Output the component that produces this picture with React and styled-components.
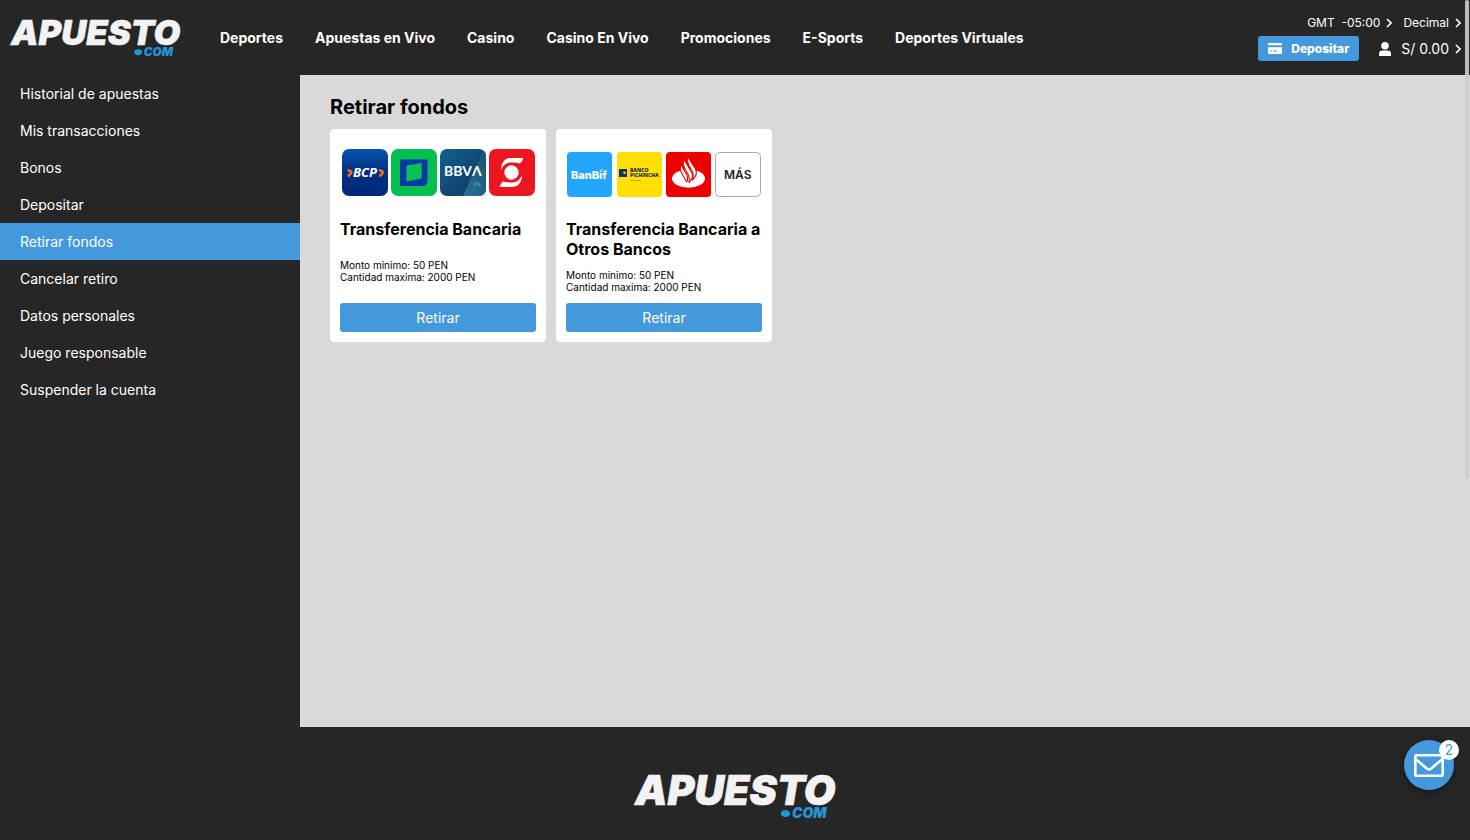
import React from "react";
import styled, { createGlobalStyle } from "styled-components";

const GlobalStyle = createGlobalStyle`
* {
	box-sizing: border-box;
}
body {
	margin: 0;
	background: #262626;
	font-family: Inter, "Liberation Sans", sans-serif;
	font-size: 14px;
	color: #fff;
}
a {
	color: inherit;
	text-decoration: none;
}
button {
	font-family: inherit;
	border: none;
	cursor: pointer;
}
`;

const Page = styled.div`
	min-height: 100vh;
	display: flex;
	flex-direction: column;
`;

const Header = styled.header`
	height: 75px;
	display: flex;
	align-items: center;
	padding: 0 9px 0 11px;
`;

const LogoSvg = styled.svg`
	display: block;
	width: ${(props) => props.$width}px;
	height: auto;
	overflow: visible;
`;

const Nav = styled.nav`
	display: flex;
	flex: 1;
	gap: 32px;
	margin-left: 40px;
	font-weight: 700;
	white-space: nowrap;
`;

const UserArea = styled.div`
	display: flex;
	flex-direction: column;
	align-items: flex-end;
	gap: 4px;
`;

const UserRow = styled.div`
	display: flex;
	align-items: center;
	gap: ${(props) => props.$gap}px;
`;

const MenuButton = styled.button`
	display: flex;
	align-items: center;
	gap: 6px;
	padding: 0;
	background: none;
	color: #fff;
	font-size: ${(props) => props.$size}px;
	line-height: 18px;
`;

const DepositButton = styled.button`
	display: flex;
	align-items: center;
	gap: 9px;
	height: 25px;
	padding: 0 10px;
	border-radius: 3px;
	background: #4499dc;
	color: #fff;
	font-size: 12px;
	font-weight: 800;
`;

const Body = styled.div`
	display: flex;
	flex: 1;
`;

const Sidebar = styled.aside`
	width: 300px;
	flex-shrink: 0;
`;

const SideLink = styled.a`
	display: block;
	padding: 0 20px;
	line-height: 37px;
	background: ${(props) => (props.$active ? "#4499dc" : "transparent")};
`;

const Main = styled.main`
	flex: 1;
	padding: 20px 30px;
	background: #d9d9d9;
	color: #000;
`;

const Title = styled.h1`
	margin: 0 0 10px;
	font-size: 20px;
	line-height: 24px;
	font-weight: 700;
`;

const Cards = styled.div`
	display: flex;
	flex-wrap: wrap;
	gap: 10px;
`;

const Card = styled.section`
	display: flex;
	flex-direction: column;
	justify-content: space-between;
	width: 216px;
	min-height: 213px;
	padding: 10px;
	border-radius: 4px;
	background: #fff;
`;

const BankSvg = styled.svg`
	display: block;
	width: 100%;
	height: 80px;
`;

const CardTitle = styled.h2`
	margin: 0;
	font-size: 16px;
	line-height: 20px;
	font-weight: 700;
`;

const Limits = styled.p`
	margin: 0;
	font-size: 10px;
	line-height: 12px;
`;

const WithdrawButton = styled.button`
	height: 29px;
	border-radius: 3px;
	background: #4499dc;
	color: #fff;
	font-size: 14px;
`;

const Footer = styled.footer`
	display: flex;
	justify-content: center;
	padding: 46px 0 22px;
`;

const ChatButton = styled.button`
	position: fixed;
	right: 16px;
	bottom: 50px;
	display: flex;
	align-items: center;
	justify-content: center;
	width: 50px;
	height: 50px;
	padding: 0;
	border-radius: 50%;
	background: #4499dc;
	box-shadow: 0 2px 8px rgba(0, 0, 0, 0.4);
`;

const Badge = styled.span`
	position: absolute;
	top: 0;
	right: -5px;
	width: 20px;
	border-radius: 50%;
	background: #fff;
	color: #4499dc;
	font-size: 14px;
	line-height: 20px;
	text-align: center;
`;

const ScrollThumb = styled.div`
	position: fixed;
	top: 0;
	right: 1px;
	width: 4px;
	height: 57vh;
	border-radius: 2px;
	background: rgba(204, 204, 204, 0.9);
`;

const Logo = ({ width }) => (
  <LogoSvg $width={width} viewBox="0 0 200 45" role="img" aria-label="Apuesto.com">
    <text
      x="0"
      y="32"
      fontFamily="Inter"
      fontSize="41"
      fontWeight="900"
      fontStyle="italic"
      fill="#f2f2f2"
      stroke="#f2f2f2"
      strokeWidth="0.6"
    >
      APUESTO
    </text>
    <ellipse cx="150.5" cy="40.5" rx="4.6" ry="3.6" fill="#2196d9" />
    <text
      x="157"
      y="45"
      fontFamily="Inter"
      fontSize="14"
      fontWeight="900"
      fontStyle="italic"
      fill="#2196d9"
    >
      COM
    </text>
  </LogoSvg>
);

const Chevron = () => (
  <svg width="6" height="10" viewBox="0 0 6 10" fill="none" stroke="#fff" strokeWidth="1.6">
    <path d="M1 1l4 4-4 4" />
  </svg>
);

const CardIcon = () => (
  <svg width="14" height="11" viewBox="0 0 14 11" fill="#fff">
    <path d="M1 0h12a1 1 0 0 1 1 1v1.2H0V1a1 1 0 0 1 1-1z" />
    <path d="M0 4.2h14V10a1 1 0 0 1-1 1H1a1 1 0 0 1-1-1zM2 7.6v1h2v-1zM5 7.6v1h4v-1z" fillRule="evenodd" />
  </svg>
);

const UserIcon = () => (
  <svg width="12" height="14" viewBox="0 0 12 14" fill="#fff">
    <circle cx="6" cy="3.8" r="3.8" />
    <path d="M0 14v-2.2C0 9.8 1.5 8.6 3.2 8.6h5.6c1.7 0 3.2 1.200 3.2 3.200V14z" />
  </svg>
);

const MailIcon = () => (
  <svg width="30" height="23" viewBox="0 0 30 23" fill="none" stroke="#fff" strokeWidth="2.6" strokeLinejoin="round">
    <rect x="1.3" y="1.3" width="27.4" height="20.4" rx="1.5" />
    <path d="M1.5 5l11.3 9.5c1.4 1.1 3 1.1 4.4 0L28.5 5" />
  </svg>
);

const MainBanks = () => (
  <BankSvg viewBox="0 0 196 80" role="img" aria-label="BCP, Interbank, BBVA, Scotiabank">
    <defs>
      <linearGradient id="bcp" x1="0" y1="0" x2="0" y2="1">
        <stop offset="0" stopColor="#0653ae" />
        <stop offset="0.5" stopColor="#023080" />
        <stop offset="1" stopColor="#02287a" />
      </linearGradient>
      <linearGradient id="bbva" x1="0" y1="0" x2="1" y2="1">
        <stop offset="0" stopColor="#14608b" />
        <stop offset="1" stopColor="#0c3565" />
      </linearGradient>
      <linearGradient id="bbvaShade" x1="1" y1="0" x2="0" y2="1">
        <stop offset="0" stopColor="#1d4e72" />
        <stop offset="1" stopColor="#2a7396" />
      </linearGradient>
      <clipPath id="bbvaTile">
        <rect x="100" y="10" width="46" height="47" rx="7" />
      </clipPath>
    </defs>
    <rect x="2" y="10" width="46" height="47" rx="7" fill="url(#bcp)" />
    <g fill="none" stroke="#f2672a" strokeWidth="2.6">
      <path d="M7.5 31l3 1.200c1 .5 1.2 1.5.3 2.300L8 37.500" />
      <path d="M39 31l3 1.200c1 .5 1.2 1.5.3 2.300L39.500 37.500" />
    </g>
    <text x="13" y="38" fontFamily="Open Sans" fontSize="13" fontWeight="700" fontStyle="italic" fill="#fff">
      BCP
    </text>
    <rect x="51" y="10" width="46" height="47" rx="7" fill="#06bf50" />
    <path d="M62 20.500h25.500v20c0 5-2 6.500-6 6.500H60V23c0-1.500.7-2.500 2-2.500z" fill="#0639a8" />
    <path d="M66.500 26.500L81.700 24v15.500L66.500 42.500z" fill="#0ac057" />
    <g clipPath="url(#bbvaTile)">
      <rect x="100" y="10" width="46" height="47" fill="url(#bbva)" />
      <path d="M144 10h2v47h-23z" fill="url(#bbvaShade)" />
    </g>
    <text x="104" y="37" fontFamily="Lato" fontSize="14" fontWeight="700" fill="#fff">
      BBVΛ
    </text>
    <text x="134" y="47" fontFamily="Open Sans" fontSize="6" fontWeight="700" fill="#2ba5c8">
      PE
    </text>
    <rect x="149" y="10" width="46" height="47" rx="7" fill="#ed1620" />
    <circle cx="171.500" cy="33.500" r="7.200" fill="#fff" />
    <path d="M161 31c0-7.500 4-12 10-12h12.300c-.6 2.600-1.800 4.600-3.800 5.400-2-.7-4.500-.9-8-.9-5 0-8.500 2.500-10.500 7.500z" fill="#fff" />
    <path d="M182 36c0 7.500-4 12-10 12h-12.300c.6-2.600 1.800-4.600 3.800-5.400 2 .7 4.500.9 8 .9 5 0 8.500-2.500 10.500-7.500z" fill="#fff" />
  </BankSvg>
);

const OtherBanks = () => (
  <BankSvg viewBox="0 0 196 80" role="img" aria-label="BanBif, Banco Pichincha, Santander, más">
    <rect x="1" y="13" width="45" height="45" rx="4" fill="#22a6fd" />
    <text x="5" y="40" fontFamily="Inter" fontSize="11" fontWeight="800" fill="#fff">
      BanBif
    </text>
    <circle cx="36" cy="31" r="1.3" fill="#8edb45" />
    <rect x="51" y="13" width="45" height="45" rx="4" fill="#ffe000" />
    <rect x="53" y="30" width="8" height="8" fill="#10305f" />
    <path d="M57.500 32.500h2v2.500h-2z" fill="#ffe000" />
    <text fontFamily="Open Sans" fontSize="5" fontWeight="800" fill="#26364f">
      <tspan x="64" y="33">BANCO</tspan>
      <tspan x="64" y="38">PICHINCHA</tspan>
    </text>
    <path d="M64 41.500h11" stroke="#b8a72a" strokeWidth="1" />
    <rect x="100" y="13" width="45" height="45" rx="4" fill="#ec0000" />
    <ellipse cx="122.500" cy="39.500" rx="16.500" ry="9.300" fill="#fff" />
    <g fill="#fff" stroke="#ec0000" strokeWidth="1.1" strokeLinejoin="round">
      <path d="M122.700 17.500c-2 3.500-1.200 6 .3 9l3 5.500c1.500 3 1.800 5.500.5 9 3.500-3.500 5-7 3-11l-4.500-7c-1.200-1.800-2-3.200-2.300-5.500z" />
      <path d="M118.500 20c-2 3.500-1.200 6.500.3 9.500l3.500 6.500c1.200 2.500 1.500 4.500.7 7.500 3.700-3.500 4.500-6.500 2.700-10l-4.700-8c-1.300-2-2-3.500-2.500-5.500z" />
      <path d="M115.500 25.500c-2 3-1.500 6 .3 9l5 8.500c1.800-3.200 1-5.500-.6-8.500l-2.500-4c-1.200-1.800-2-3-2.200-5z" />
    </g>
    <rect x="149.5" y="13.5" width="45" height="44" rx="4" fill="#fff" stroke="#aaa" />
    <text x="158" y="40" fontFamily="Inter" fontSize="12" fontWeight="600" fill="#222">
      MÁS
    </text>
  </BankSvg>
);

const navItems = [
  "Deportes",
  "Apuestas en Vivo",
  "Casino",
  "Casino En Vivo",
  "Promociones",
  "E-Sports",
  "Deportes Virtuales",
];

const sideItems = [
  "Historial de apuestas",
  "Mis transacciones",
  "Bonos",
  "Depositar",
  "Retirar fondos",
  "Cancelar retiro",
  "Datos personales",
  "Juego responsable",
  "Suspender la cuenta",
];

const methods = [
  { name: "Transferencia Bancaria", Banks: MainBanks },
  { name: "Transferencia Bancaria a Otros Bancos", Banks: OtherBanks },
];

const App = () => {
  return (
    <Page>
      <GlobalStyle />
      <Header>
        <a href="#inicio">
          <Logo width={169} />
        </a>
        <Nav>
          {navItems.map((item) => (
            <a href="#nav" key={item}>
              {item}
            </a>
          ))}
        </Nav>
        <UserArea>
          <UserRow $gap={11}>
            <MenuButton $size={12}>
              <span>GMT&nbsp; -05:00</span> <Chevron />
            </MenuButton>
            <MenuButton $size={12}>
              Decimal <Chevron />
            </MenuButton>
          </UserRow>
          <UserRow $gap={20}>
            <DepositButton>
              <CardIcon /> Depositar
            </DepositButton>
            <UserRow $gap={10}>
              <UserIcon />
              <MenuButton $size={14}>
                S/ 0.00 <Chevron />
              </MenuButton>
            </UserRow>
          </UserRow>
        </UserArea>
      </Header>
      <Body>
        <Sidebar>
          {sideItems.map((item) => (
            <SideLink href="#cuenta" key={item} $active={item === "Retirar fondos"}>
              {item}
            </SideLink>
          ))}
        </Sidebar>
        <Main>
          <Title>Retirar fondos</Title>
          <Cards>
            {methods.map(({ name, Banks }) => (
              <Card key={name}>
                <div>
                  <Banks />
                  <CardTitle>{name}</CardTitle>
                </div>
                <Limits>
                  Monto minimo: 50 PEN
                  <br />
                  Cantidad maxima: 2000 PEN
                </Limits>
                <WithdrawButton>Retirar</WithdrawButton>
              </Card>
            ))}
          </Cards>
        </Main>
      </Body>
      <Footer>
        <Logo width={200} />
      </Footer>
      <ChatButton aria-label="Mensajes">
        <MailIcon />
        <Badge>2</Badge>
      </ChatButton>
      <ScrollThumb />
    </Page>
  );
};

export default App;
